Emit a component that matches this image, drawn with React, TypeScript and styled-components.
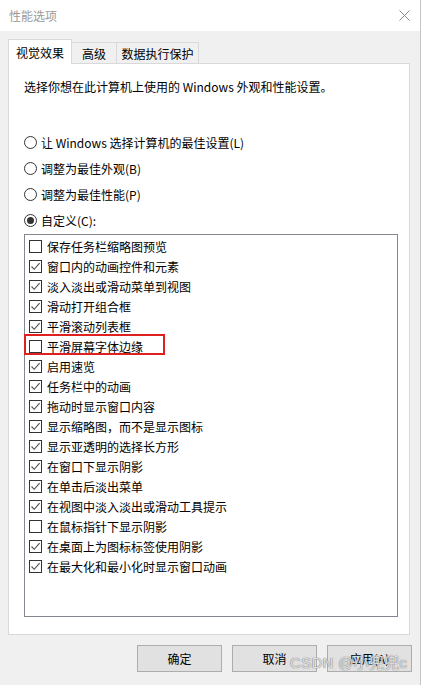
import React from 'react';
import styled, { createGlobalStyle } from 'styled-components';

const GlobalStyle = createGlobalStyle`
  html, body {
    margin: 0;
    padding: 0;
    background: #ffffff;
  }
  * {
    box-sizing: border-box;
  }
`;

const FONT = `"Noto Sans CJK SC", "Liberation Sans", sans-serif`;

const Window = styled.div`
  position: relative;
  width: 421px;
  height: 685px;
  display: flex;
  flex-direction: column;
  background: #f0f0f0;
  border-right: 1px solid #c4c4c4;
  font-family: ${FONT};
  font-size: 12px;
  color: #000;
  overflow: hidden;
`;

const TitleBar = styled.div`
  height: 31px;
  flex: none;
  display: flex;
  align-items: center;
  justify-content: space-between;
  padding: 0 10px 0 9px;
  background: #ffffff;
  color: #9a9a9a;
  font-size: 12px;
`;

const CloseIcon = () => (
  <svg width="11" height="11" viewBox="0 0 11 11">
    <path d="M0.5 0.5 L10.5 10.5 M10.5 0.5 L0.5 10.5" stroke="#8a8a8a" strokeWidth="1" />
  </svg>
);

const Body = styled.div`
  flex: 1;
  display: flex;
  flex-direction: column;
  padding: 9px 8px 0 8px;
`;

const TabStrip = styled.div`
  display: flex;
  align-items: flex-end;
  height: 24px;
  position: relative;
  z-index: 1;
  margin-bottom: -1px;
`;

const Tab = styled.div<{ $active?: boolean; $w: number }>`
  width: ${(p) => p.$w}px;
  height: ${(p) => (p.$active ? 25 : 22)}px;
  display: flex;
  align-items: center;
  justify-content: center;
  padding-top: ${(p) => (p.$active ? 0 : 1)}px;
  background: ${(p) => (p.$active ? '#ffffff' : '#f0f0f0')};
  border: 1px solid #d9d9d9;
  border-bottom: ${(p) => (p.$active ? 'none' : '1px solid #d9d9d9')};
  margin-left: ${(p) => (p.$active ? 0 : -1)}px;
  font-size: 12px;
  white-space: nowrap;
`;

const Panel = styled.div`
  height: 572px;
  margin-right: 2px;
  background: #ffffff;
  border: 1px solid #d9d9d9;
  padding: 15px 0 0 15px;
  display: flex;
  flex-direction: column;
`;

const Description = styled.div`
  line-height: 16px;
  height: 16px;
  margin-bottom: 34px;
  white-space: nowrap;
`;

const RadioRow = styled.label`
  height: 26px;
  display: flex;
  align-items: center;
  gap: 4px;
  white-space: nowrap;
`;

const RadioCircle = styled.span<{ $checked?: boolean }>`
  width: 13px;
  height: 13px;
  flex: none;
  border-radius: 50%;
  border: 1px solid #333333;
  background: #ffffff;
  display: flex;
  align-items: center;
  justify-content: center;

  &::after {
    content: '';
    display: ${(p) => (p.$checked ? 'block' : 'none')};
    width: 7px;
    height: 7px;
    border-radius: 50%;
    background: #333333;
  }
`;

const List = styled.div`
  width: 374px;
  height: 383px;
  margin-top: 1px;
  border: 1px solid #828790;
  background: #ffffff;
  padding: 1px 0 0 4px;
  display: flex;
  flex-direction: column;
`;

const CheckRow = styled.div`
  position: relative;
  height: 20px;
  display: flex;
  align-items: center;
  gap: 5px;
  white-space: nowrap;
`;

const Box = styled.span`
  width: 13px;
  height: 13px;
  flex: none;
  border: 1px solid #333333;
  background: #ffffff;
  display: flex;
  align-items: center;
  justify-content: center;
`;

const Highlight = styled.span`
  position: absolute;
  left: -5px;
  top: -2px;
  width: 141px;
  height: 21px;
  border: 2px solid #e0201e;
  pointer-events: none;
`;

const Footer = styled.div`
  display: flex;
  justify-content: flex-end;
  gap: 10px;
  margin-top: 10px;
`;

const Button = styled.button`
  width: 85px;
  height: 27px;
  background: #e1e1e1;
  border: 1px solid #adadad;
  font-family: ${FONT};
  font-size: 12px;
  color: #000;
  padding: 0;
`;

const Watermark = styled.div`
  position: absolute;
  left: 290px;
  top: 651px;
  font-family: "Liberation Sans", "Noto Sans CJK SC", sans-serif;
  font-size: 15px;
  letter-spacing: 0.3px;
  color: rgba(255, 255, 255, 0.75);
  text-shadow: 0 0 1px #7a7a7a, 0 0 1px #7a7a7a;
  white-space: nowrap;
  pointer-events: none;
`;

const Check = () => (
  <svg width="11" height="11" viewBox="0 0 11 11">
    <path d="M1.5 5.5 L4.2 8.3 L9.6 2.2" fill="none" stroke="#4d4d4d" strokeWidth="1.1" />
  </svg>
);

const radios = [
  { label: '让 Windows 选择计算机的最佳设置(L)', checked: false },
  { label: '调整为最佳外观(B)', checked: false },
  { label: '调整为最佳性能(P)', checked: false },
  { label: '自定义(C):', checked: true },
];

const options: { label: string; checked: boolean; marked?: boolean }[] = [
  { label: '保存任务栏缩略图预览', checked: false },
  { label: '窗口内的动画控件和元素', checked: true },
  { label: '淡入淡出或滑动菜单到视图', checked: true },
  { label: '滑动打开组合框', checked: true },
  { label: '平滑滚动列表框', checked: true },
  { label: '平滑屏幕字体边缘', checked: false, marked: true },
  { label: '启用速览', checked: true },
  { label: '任务栏中的动画', checked: true },
  { label: '拖动时显示窗口内容', checked: true },
  { label: '显示缩略图，而不是显示图标', checked: true },
  { label: '显示亚透明的选择长方形', checked: true },
  { label: '在窗口下显示阴影', checked: true },
  { label: '在单击后淡出菜单', checked: true },
  { label: '在视图中淡入淡出或滑动工具提示', checked: true },
  { label: '在鼠标指针下显示阴影', checked: false },
  { label: '在桌面上为图标标签使用阴影', checked: true },
  { label: '在最大化和最小化时显示窗口动画', checked: true },
];

const App: React.FC = () => {
  return (
    <>
      <GlobalStyle />
      <Window>
        <TitleBar>
          <span>性能选项</span>
          <CloseIcon />
        </TitleBar>
        <Body>
          <TabStrip>
            <Tab $active $w={64}>视觉效果</Tab>
            <Tab $w={46}>高级</Tab>
            <Tab $w={83}>数据执行保护</Tab>
          </TabStrip>
          <Panel>
            <Description>选择你想在此计算机上使用的 Windows 外观和性能设置。</Description>
            {radios.map((r) => (
              <RadioRow key={r.label}>
                <RadioCircle $checked={r.checked} />
                <span>{r.label}</span>
              </RadioRow>
            ))}
            <List>
              {options.map((o) => (
                <CheckRow key={o.label}>
                  <Box>{o.checked && <Check />}</Box>
                  <span>{o.label}</span>
                  {o.marked && <Highlight />}
                </CheckRow>
              ))}
            </List>
          </Panel>
          <Footer>
            <Button>确定</Button>
            <Button>取消</Button>
            <Button>应用(A)</Button>
          </Footer>
        </Body>
        <Watermark>CSDN @小兜兜c</Watermark>
      </Window>
    </>
  );
};

export default App;
